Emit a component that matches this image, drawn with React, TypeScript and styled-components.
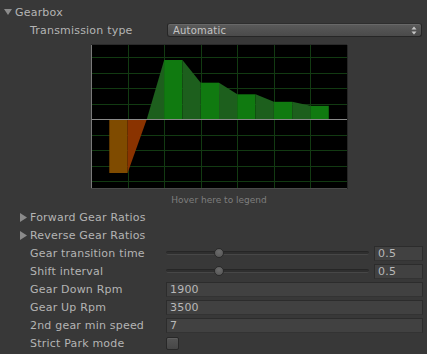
import React from "react";
import styled, { createGlobalStyle } from "styled-components";

const Global = createGlobalStyle`
  html, body { margin: 0; padding: 0; background: #383838; }
  #root { width: 427px; height: 354px; overflow: hidden; }
`;

const Inspector = styled.div`
  display: flex;
  flex-direction: column;
  padding: 3px 4px 0 0;
  font-family: "DejaVu Sans", "Liberation Sans", sans-serif;
  font-size: 11px;
  letter-spacing: 0.2px;
  color: #b4b4b4;
  background: #383838;
`;

const Row = styled.div<{ $indent: number }>`
  display: flex;
  align-items: center;
  height: 18px;
  padding-left: ${(p) => p.$indent}px;
`;

const Foldout = styled.div`
  display: flex;
  align-items: center;
  gap: 3px;
  white-space: nowrap;
`;

const Label = styled.div`
  width: 136px;
  flex-shrink: 0;
  white-space: nowrap;
`;

const Popup = styled.div`
  flex: 1;
  margin: 0 1px;
  height: 14px;
  box-sizing: border-box;
  border: 1px solid #262626;
  border-top-color: #2e2e2e;
  border-radius: 3px;
  background: linear-gradient(#5b5b5b, #4a4a4a);
  box-shadow: inset 0 1px 0 #686868;
  display: flex;
  align-items: center;
  justify-content: space-between;
  padding: 0 4px 0 5px;
  font-size: 10px;
  color: #c4c4c4;
`;

const ChartArea = styled.div`
  display: flex;
  flex-direction: column;
  align-items: center;
  padding-left: 15px;
  margin-top: 6px;
`;

const ChartBox = styled.div`
  width: 256px;
  height: 144px;
  background: #000;
  box-shadow: 1px 0 0 #262626, 0 -1px 0 #2a2a2a;
`;

const Caption = styled.div`
  height: 16px;
  padding-top: 3px;
  line-height: 16px;
  font-size: 9px;
  letter-spacing: 0;
  color: #7e7e7e;
`;

const Field = styled.div<{ $width?: number }>`
  ${(p) => (p.$width ? `width: ${p.$width}px; flex-shrink: 0;` : "flex: 1;")}
  height: 15px;
  box-sizing: border-box;
  border: 1px solid #2c2c2c;
  border-bottom-color: #333;
  background: #414141;
  padding-left: 3px;
  line-height: 13px;
  color: #b8b8b8;
`;

const SliderWrap = styled.div`
  display: flex;
  align-items: center;
  flex: 1;
  gap: 5px;
`;

const Track = styled.div`
  position: relative;
  flex: 1;
  height: 4px;
  box-sizing: border-box;
  border-radius: 2px;
  background: #2f2f2f;
  border-top: 1px solid #262626;
  border-bottom: 1px solid #474747;
`;

const Thumb = styled.div<{ $pos: number }>`
  position: absolute;
  left: ${(p) => p.$pos}%;
  top: 50%;
  width: 10px;
  height: 10px;
  margin: -5px 0 0 -5px;
  box-sizing: border-box;
  border-radius: 50%;
  border: 1px solid #2a2a2a;
  background: radial-gradient(circle at 50% 35%, #6c6c6c, #535353);
`;

const Check = styled.div`
  width: 13px;
  height: 13px;
  box-sizing: border-box;
  border-radius: 2px;
  border: 1px solid #282828;
  background: linear-gradient(#555, #464646);
  box-shadow: inset 0 1px 0 #5f5f5f;
`;

const Tri = ({ dir }: { dir: "down" | "right" }) =>
  dir === "down" ? (
    <svg width="8" height="8" viewBox="0 0 8 8">
      <polygon points="0,1 8,1 4,7" fill="#8c8c8c" />
    </svg>
  ) : (
    <svg width="8" height="9" viewBox="0 0 8 9">
      <polygon points="1,0 8,4.5 1,9" fill="#8a8a8a" />
    </svg>
  );

const PopupArrows = () => (
  <svg width="6" height="9" viewBox="0 0 6 9">
    <polygon points="0.5,3.5 3,0.5 5.5,3.5" fill="#c6c6c6" />
    <polygon points="0.5,5.5 3,8.5 5.5,5.5" fill="#c6c6c6" />
  </svg>
);

const hLines = [12.5, 28.5, 43.5, 59.5, 90.5, 105.5, 121.5, 136.5];
const vLines = [37.5, 73.5, 110.5, 146.5, 183.5, 219.5];
const ZERO = 74.5;
const k = (i: number) => i * 18.29;

const gears = [15, 37.7, 49.3, 56.8, 60.8];

const GearChart = () => {
  const bright = "#107a10";
  const dark = "#1d5f1d";
  const shapes: React.ReactNode[] = [];
  shapes.push(<rect key="rev" x={k(1)} y={ZERO} width={k(2) - k(1)} height={128 - ZERO} fill="#7f4b00" />);
  shapes.push(<polygon key="revt" points={`${k(2)},${ZERO} ${k(2)},128 55.7,${ZERO}`} fill="#8a3300" />);
  shapes.push(<polygon key="g0t" points={`55.7,${ZERO} ${k(4)},${gears[0]} ${k(4)},${ZERO}`} fill={dark} />);
  gears.forEach((g, i) => {
    const x0 = k(4 + i * 2);
    const x1 = k(5 + i * 2);
    shapes.push(<rect key={`g${i}`} x={x0} y={g} width={x1 - x0} height={ZERO - g} fill={bright} />);
    if (i < gears.length - 1) {
      const x2 = k(6 + i * 2);
      shapes.push(
        <polygon key={`t${i}`} points={`${x1},${ZERO} ${x1},${g} ${x2},${gears[i + 1]} ${x2},${ZERO}`} fill={dark} />
      );
    }
  });
  return (
    <svg width="256" height="144" viewBox="0 0 256 144" shapeRendering="crispEdges">
      {hLines.map((y) => (
        <line key={`h${y}`} x1="0" x2="256" y1={y} y2={y} stroke="#123a12" strokeWidth="1" />
      ))}
      {vLines.map((x) => (
        <line key={`v${x}`} x1={x} x2={x} y1="0" y2="144" stroke="#123a12" strokeWidth="1" />
      ))}
      <g shapeRendering="auto">{shapes}</g>
      <line x1="0" x2="256" y1={ZERO} y2={ZERO} stroke="#8a8a8a" strokeWidth="1" />
      <line x1="0.5" x2="0.5" y1="0" y2="144" stroke="#7a7a7a" strokeWidth="1" />
      <line x1="0" x2="256" y1="143.5" y2="143.5" stroke="#4a4a4a" strokeWidth="1" />
    </svg>
  );
};

export default function App() {
  return (
    <>
      <Global />
      <Inspector>
        <Row $indent={4}>
          <Foldout>
            <Tri dir="down" />
            <span>Gearbox</span>
          </Foldout>
        </Row>
        <Row $indent={30}>
          <Label>Transmission type</Label>
          <Popup>
            <span>Automatic</span>
            <PopupArrows />
          </Popup>
        </Row>
        <ChartArea>
          <ChartBox>
            <GearChart />
          </ChartBox>
          <Caption>Hover here to legend</Caption>
        </ChartArea>
        <Row $indent={19}>
          <Foldout>
            <Tri dir="right" />
            <span>Forward Gear Ratios</span>
          </Foldout>
        </Row>
        <Row $indent={19}>
          <Foldout>
            <Tri dir="right" />
            <span>Reverse Gear Ratios</span>
          </Foldout>
        </Row>
        <Row $indent={30}>
          <Label>Gear transition time</Label>
          <SliderWrap>
            <Track>
              <Thumb $pos={26} />
            </Track>
            <Field $width={49}>0.5</Field>
          </SliderWrap>
        </Row>
        <Row $indent={30}>
          <Label>Shift interval</Label>
          <SliderWrap>
            <Track>
              <Thumb $pos={26} />
            </Track>
            <Field $width={49}>0.5</Field>
          </SliderWrap>
        </Row>
        <Row $indent={30}>
          <Label>Gear Down Rpm</Label>
          <Field>1900</Field>
        </Row>
        <Row $indent={30}>
          <Label>Gear Up Rpm</Label>
          <Field>3500</Field>
        </Row>
        <Row $indent={30}>
          <Label>2nd gear min speed</Label>
          <Field>7</Field>
        </Row>
        <Row $indent={30}>
          <Label>Strict Park mode</Label>
          <Check />
        </Row>
      </Inspector>
    </>
  );
}
